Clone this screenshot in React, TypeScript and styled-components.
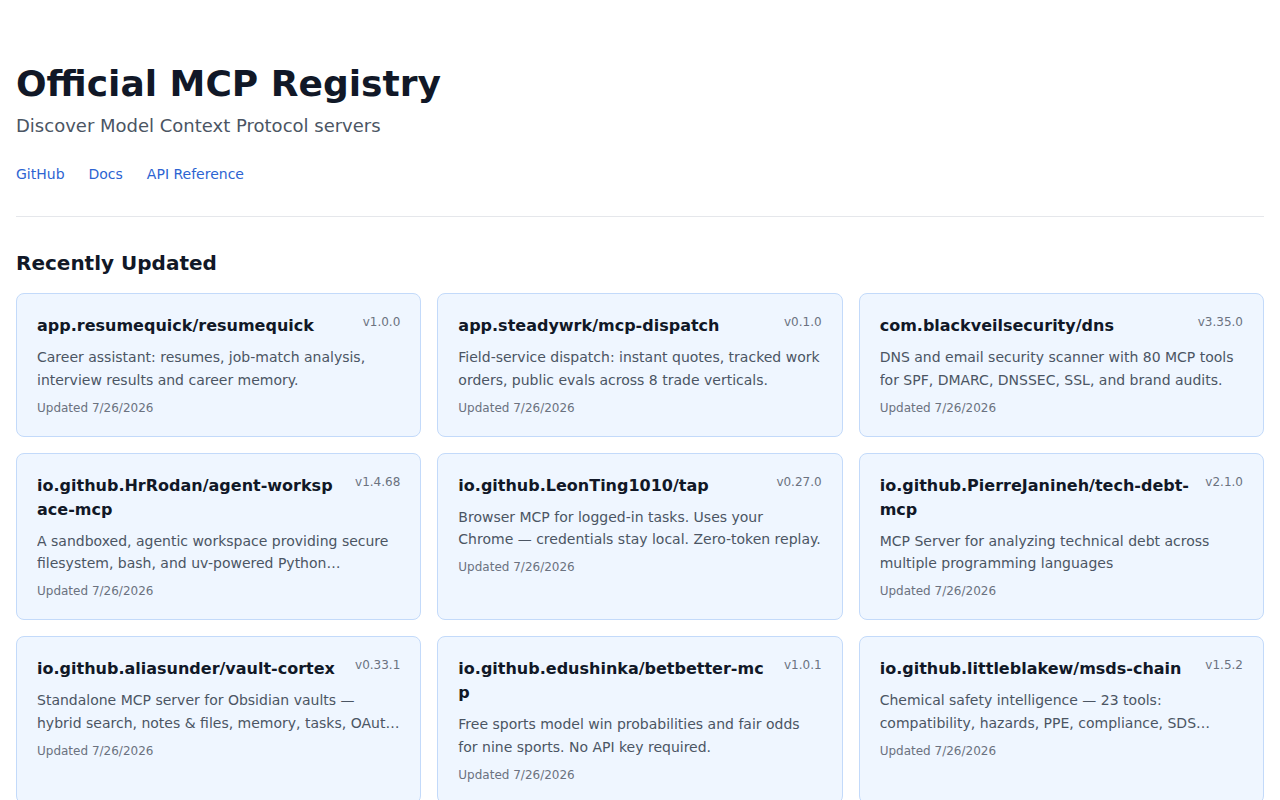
import React from "react";
import styled, { createGlobalStyle } from "styled-components";

const GlobalStyle = createGlobalStyle`
  body {
    margin: 0;
    background: #ffffff;
    font-family: "DejaVu Sans", system-ui, sans-serif;
    color: #111827;
  }
`;

const Page = styled.main`
  padding: 48px 16px 0;
`;

const Header = styled.header`
  padding-bottom: 32px;
  border-bottom: 1px solid #e5e7eb;
`;

const Title = styled.h1`
  margin: 14px 0 0;
  font-size: 36px;
  line-height: 44px;
  font-weight: 700;
  color: #111827;
`;

const Subtitle = styled.p`
  margin: 6px 0 0;
  font-size: 18px;
  line-height: 28px;
  color: #4b5563;
`;

const Nav = styled.nav`
  display: flex;
  gap: 24px;
  margin-top: 24px;
`;

const NavLink = styled.a`
  font-size: 14px;
  line-height: 20px;
  color: #2d64d2;
  text-decoration: none;
`;

const SectionTitle = styled.h2`
  margin: 32px 0 16px;
  font-size: 20px;
  line-height: 28px;
  font-weight: 700;
  color: #111827;
`;

const Grid = styled.div`
  display: grid;
  grid-template-columns: repeat(3, 1fr);
  gap: 16px;
`;

const Card = styled.article`
  background: #eff6ff;
  border: 1px solid #c3dafa;
  border-radius: 8px;
  padding: 20px;
`;

const CardHead = styled.div`
  display: flex;
  justify-content: space-between;
  align-items: flex-start;
  gap: 12px;
`;

const Name = styled.h3`
  margin: 0;
  font-size: 16px;
  line-height: 24px;
  font-weight: 700;
  color: #111827;
  word-break: break-all;
`;

const Version = styled.span`
  flex-shrink: 0;
  font-size: 12px;
  line-height: 16px;
  color: #6b7280;
`;

const Description = styled.p`
  margin: 8px 0 0;
  font-size: 14px;
  line-height: 22.75px;
  color: #4b5563;
  display: -webkit-box;
  -webkit-line-clamp: 2;
  -webkit-box-orient: vertical;
  overflow: hidden;
`;

const Updated = styled.div`
  margin-top: 8px;
  font-size: 12px;
  line-height: 16px;
  color: #6b7280;
`;

type Server = {
  name: string;
  version: string;
  description: string;
};

const servers: Server[] = [
  {
    name: "app.resumequick/resumequick",
    version: "v1.0.0",
    description:
      "Career assistant: resumes, job-match analysis, interview results and career memory.",
  },
  {
    name: "app.steadywrk/mcp-dispatch",
    version: "v0.1.0",
    description:
      "Field-service dispatch: instant quotes, tracked work orders, public evals across 8 trade verticals.",
  },
  {
    name: "com.blackveilsecurity/dns",
    version: "v3.35.0",
    description:
      "DNS and email security scanner with 80 MCP tools for SPF, DMARC, DNSSEC, SSL, and brand audits.",
  },
  {
    name: "io.github.HrRodan/agent-workspace-mcp",
    version: "v1.4.68",
    description:
      "A sandboxed, agentic workspace providing secure filesystem, bash, and uv-powered Python environments for AI agents.",
  },
  {
    name: "io.github.LeonTing1010/tap",
    version: "v0.27.0",
    description:
      "Browser MCP for logged-in tasks. Uses your Chrome — credentials stay local. Zero-token replay.",
  },
  {
    name: "io.github.PierreJanineh/tech-debt-mcp",
    version: "v2.1.0",
    description:
      "MCP Server for analyzing technical debt across multiple programming languages",
  },
  {
    name: "io.github.aliasunder/vault-cortex",
    version: "v0.33.1",
    description:
      "Standalone MCP server for Obsidian vaults — hybrid search, notes & files, memory, tasks, OAuth and more.",
  },
  {
    name: "io.github.edushinka/betbetter-mcp",
    version: "v1.0.1",
    description:
      "Free sports model win probabilities and fair odds for nine sports. No API key required.",
  },
  {
    name: "io.github.littleblakew/msds-chain",
    version: "v1.5.2",
    description:
      "Chemical safety intelligence — 23 tools: compatibility, hazards, PPE, compliance, SDS lookups and more.",
  },
];

export default function App() {
  return (
    <>
      <GlobalStyle />
      <Page>
        <Header>
          <Title>Official MCP Registry</Title>
          <Subtitle>Discover Model Context Protocol servers</Subtitle>
          <Nav>
            <NavLink href="#">GitHub</NavLink>
            <NavLink href="#">Docs</NavLink>
            <NavLink href="#">API Reference</NavLink>
          </Nav>
        </Header>
        <SectionTitle>Recently Updated</SectionTitle>
        <Grid>
          {servers.map((s) => (
            <Card key={s.name}>
              <CardHead>
                <Name>{s.name}</Name>
                <Version>{s.version}</Version>
              </CardHead>
              <Description>{s.description}</Description>
              <Updated>Updated 7/26/2026</Updated>
            </Card>
          ))}
        </Grid>
      </Page>
    </>
  );
}
